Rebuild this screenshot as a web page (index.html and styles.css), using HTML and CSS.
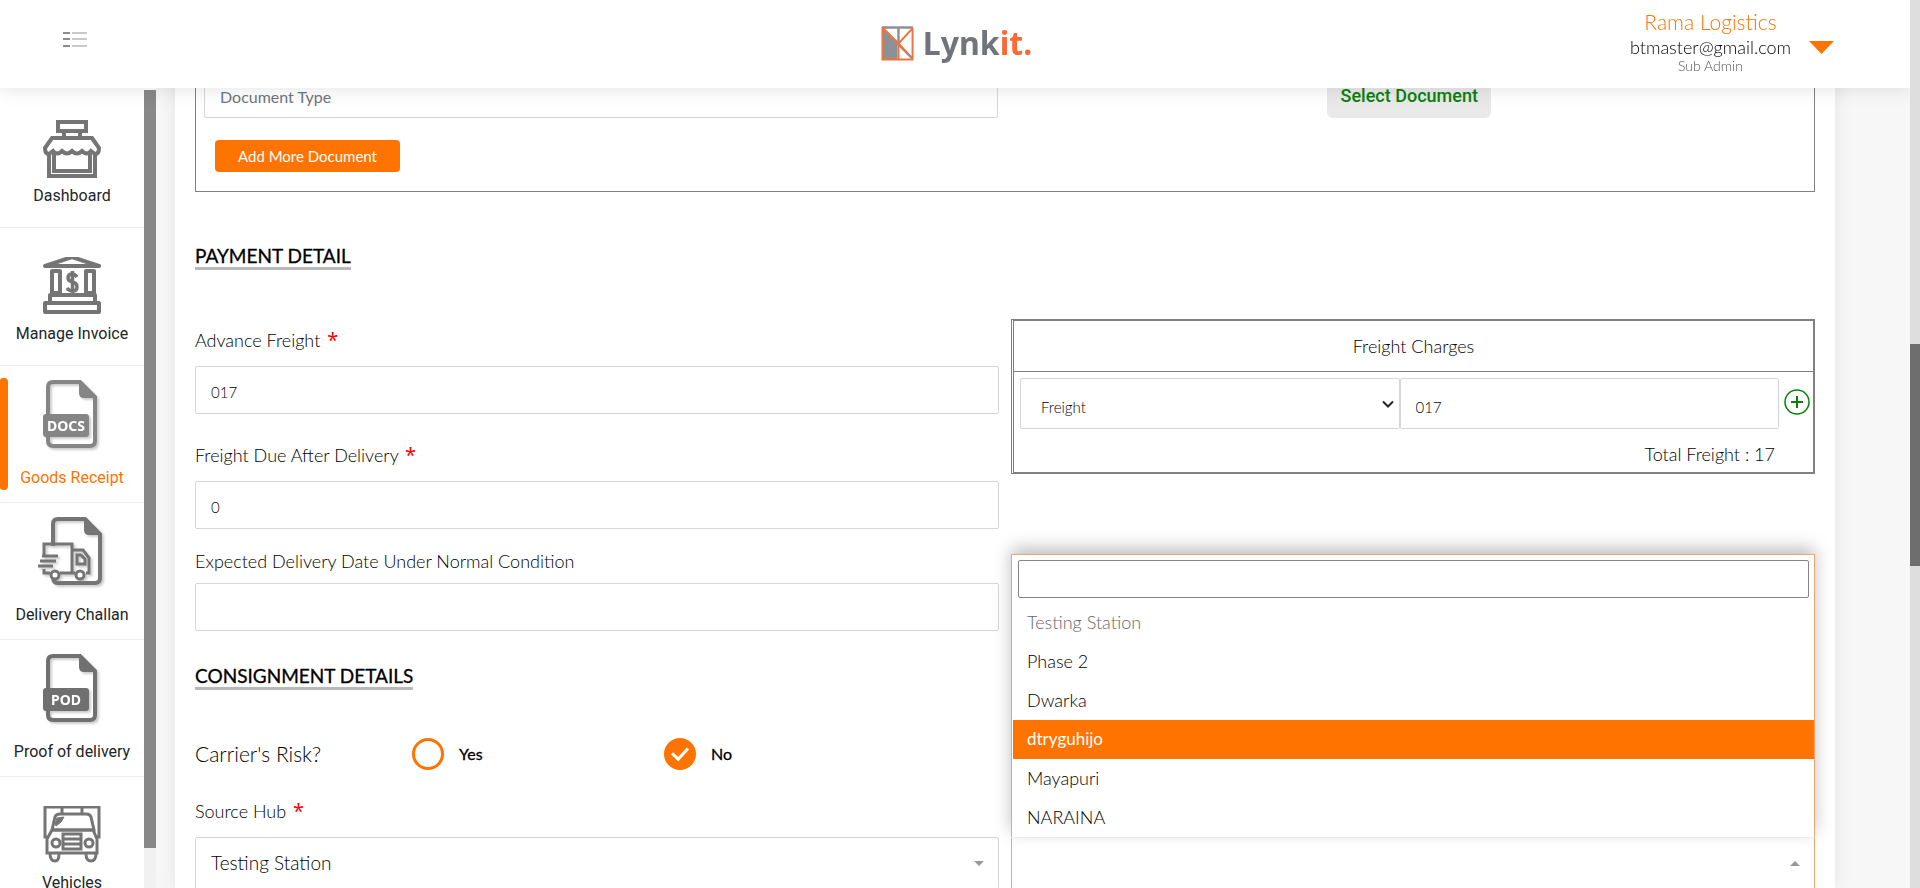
FILE: index.html
```html
<!DOCTYPE html>
<html lang="en">
<head>
<meta charset="utf-8">
<title>Lynkit - Goods Receipt</title>
<link rel="stylesheet" href="styles.css">
</head>
<body>
<header class="topbar">
  <button class="menu-toggle" type="button" aria-label="Toggle menu">
    <svg width="24" height="16" viewBox="0 0 24 16"><path d="M0 1h7M0 7h7M0 14h7" stroke="#8c8c8c" stroke-width="2"/><path d="M9 1h15M9 7h15M9 14h15" stroke="#c9c9c9" stroke-width="2"/></svg>
  </button>
  <a class="brand" href="#" aria-label="Lynkit">
    <svg width="33" height="35" viewBox="0 0 34 36" fill="none"><path d="M2 3L17 18V34H2z" fill="#8d9094"/><path d="M1 1.500H33M18 2V17M17 18L32 33" stroke="#8d9094" stroke-width="2.500"/><path d="M1.500 1V34.500H32.500V2M2 2L18 18V34M18 18L32 3M18 18L28 29" stroke="#f4703a" stroke-width="2"/></svg>
    <span class="brand-name">Lynk<span class="brand-accent">it.</span></span>
  </a>
  <div class="account">
    <div class="account-text">
      <span class="account-name">Rama Logistics</span>
      <span class="account-mail">btmaster@gmail.com</span>
      <span class="account-role">Sub Admin</span>
    </div>
    <button class="account-toggle" type="button" aria-label="Account menu"><svg width="25" height="13" viewBox="0 0 25 13"><path d="M0 0H25L12.500 13z" fill="#ff7300"/></svg></button>
  </div>
</header>

<div class="layout">
  <nav class="sidebar">
    <div class="side-list">
      <a class="side-item" href="#">
        <svg width="58" height="60" viewBox="0 0 58 60" fill="none" stroke="#757575" stroke-width="4"><path d="M15 3H43V12H15zM21 12V19M37 12V19M9 19H49L56 29Q56 35 52 35L48 32Q44 37 39 32Q34 37 29 32Q24 37 19 32Q14 37 10 32L6 35Q2 35 2 29z"/><path d="M6 34V57H52V34M11 34V52H47V34"/></svg>
        <span>Dashboard</span>
      </a>
      <a class="side-item" href="#">
        <svg width="58" height="60" viewBox="0 3 58 60" fill="none" stroke="#757575" stroke-width="3"><path d="M2 12L29 3L56 12zM9 17H17V39H9zM43 17H51V39H43zM7 41H52V49H7zM2 49H56V58H2z" stroke-width="4" stroke-linejoin="round"/><path d="M34 23Q32 20 29 20Q25 20 25 24Q25 27 29.500 28Q34 29 34 33Q34 37 29.500 37Q26 37 24 34M29.500 17V40" stroke-width="3.500"/></svg>
        <span>Manage Invoice</span>
      </a>
      <a class="side-item side-item-doc side-item-active" href="#">
        <svg class="doc-icon" width="60" height="72" viewBox="0 0 60 72"><path d="M11 3H38L53 18V62Q53 67 48 67H11Q6 67 6 62V8Q6 3 11 3z" fill="none" stroke="#858585" stroke-width="4"/><path d="M37 3L53 19H42Q37 19 37 14z" fill="#858585"/><rect x="1" y="35" width="46" height="23" rx="3" fill="#858585"/><text class="doc-tag" x="24" y="52" text-anchor="middle">DOCS</text></svg>
        <span>Goods Receipt</span>
      </a>
      <a class="side-item side-item-doc" href="#">
        <svg class="doc-icon" width="70" height="72" viewBox="0 0 70 72" fill="none" stroke="#757575" stroke-width="4"><path d="M16 30V8Q16 3 21 3H48L63 18V62Q63 67 58 67H21Q17 67 16 63"/><path d="M47 3L63 19H52Q47 19 47 14z" fill="#757575" stroke="none"/><path d="M7 40V28H35V57M35 34H46L52 42V57H49M38 57H23M13 57H7V53" stroke-width="3"/><path d="M40 39H44L48 43V48H40z" stroke-width="3"/><circle cx="18" cy="59" r="4" fill="#fff" stroke-width="3"/><circle cx="43" cy="59" r="4" fill="#fff" stroke-width="3"/><path d="M5 40H21M3 45H19M1 50H16" stroke-width="3"/></svg>
        <span>Delivery Challan</span>
      </a>
      <a class="side-item side-item-doc" href="#">
        <svg class="doc-icon" width="60" height="72" viewBox="0 0 60 72"><path d="M11 3H38L53 18V62Q53 67 48 67H11Q6 67 6 62V8Q6 3 11 3z" fill="none" stroke="#707070" stroke-width="4"/><path d="M37 3L53 19H42Q37 19 37 14z" fill="#707070"/><rect x="1" y="35" width="46" height="23" rx="3" fill="#707070"/><text class="doc-tag" x="24" y="52" text-anchor="middle">POD</text></svg>
        <span>Proof of delivery</span>
      </a>
      <a class="side-item" href="#">
        <svg width="58" height="60" viewBox="0 3 58 60" fill="none" stroke="#757575" stroke-width="3"><path d="M4 34H2V4H56V34H54M19 4V11M39 4V11M9 27L12 14Q13 11 17 11H43Q47 11 48 14L51 27z"/><path d="M9 27L4 36V50H54V36L50 27zM20 31H38V46H20zM21 36H37M21 41H37"/><circle cx="13" cy="40" r="4"/><circle cx="46" cy="40" r="4"/><path d="M7 50Q7 58 12 58Q16 58 16 51M43 51Q43 58 48 58Q53 58 53 50"/><path d="M12 21L14 15L21 14L18 19L13 23z" fill="#757575" stroke-width="1"/></svg>
        <span>Vehicles</span>
      </a>
    </div>
    <div class="side-scroll"><div class="side-thumb"></div></div>
  </nav>

  <main class="content">
    <form class="card">
      <section class="documents">
        <input class="field doc-field" type="text" placeholder="Document Type" aria-label="Document Type">
        <div class="doc-side"><button class="select-doc" type="button">Select Document</button></div>
        <button class="add-doc" type="button">Add More Document</button>
      </section>

      <h2 class="section-title">PAYMENT DETAIL</h2>
      <section class="columns payment">
        <div class="stack">
          <div class="group group-wide"><label class="label" for="advance">Advance Freight <span class="req">*</span></label><input class="field" id="advance" type="text" value="017"></div>
          <div class="group group-mid"><label class="label" for="due">Freight Due After Delivery <span class="req">*</span></label><input class="field" id="due" type="text" value="0"></div>
          <div class="group"><label class="label" for="expected">Expected Delivery Date Under Normal Condition</label><input class="field" id="expected" type="text"></div>
        </div>
        <div class="charges">
          <div class="charges-inner">
            <div class="charges-title">Freight Charges</div>
            <div class="charges-row">
              <select class="field charge-type" aria-label="Charge type"><option>Freight</option></select>
              <input class="field charge-amount" type="text" value="017" aria-label="Charge amount">
              <button class="add-charge" type="button" aria-label="Add charge"><svg width="26" height="26" viewBox="0 0 26 26" fill="none" stroke="#088008" stroke-width="1.500"><circle cx="13" cy="13" r="12"/><path d="M7 13H19M13 7V19" stroke-width="2"/></svg></button>
            </div>
            <div class="charges-total">Total Freight : 17</div>
          </div>
        </div>
      </section>

      <h2 class="section-title">CONSIGNMENT DETAILS</h2>
      <div class="risk" role="radiogroup" aria-labelledby="risk-label">
        <span class="risk-label" id="risk-label">Carrier's Risk?</span>
        <label class="choice"><input class="radio" type="radio" name="risk">Yes</label>
        <label class="choice"><input class="radio" type="radio" name="risk" checked>No</label>
      </div>

      <section class="columns">
        <div class="hub">
          <label class="label" for="source">Source Hub <span class="req">*</span></label>
          <select class="hub-select" id="source"><option>Testing Station</option></select>
        </div>
        <div class="hub">
          <span class="label">&nbsp;</span>
          <div class="hub-open">
            <select class="hub-select hub-select-open" aria-label="Destination"><option></option></select>
            <div class="menu">
              <div class="menu-search"><input class="search" type="search" aria-label="Search stations"></div>
              <ul class="options" role="listbox" aria-label="Stations">
                <li class="option option-disabled" role="option">Testing Station</li>
                <li class="option" role="option">Phase 2</li>
                <li class="option" role="option">Dwarka</li>
                <li class="option option-current" role="option" aria-selected="true">dtryguhijo</li>
                <li class="option" role="option">Mayapuri</li>
                <li class="option" role="option">NARAINA</li>
              </ul>
            </div>
          </div>
        </div>
      </section>
    </form>
  </main>
  <div class="page-scroll"><div class="page-thumb"></div></div>
</div>
</body>
</html>
```
FILE: styles.css
```css
* { box-sizing: border-box; }

body {
  margin: 0;
  height: 100vh;
  overflow: hidden;
  background: #f7f7f7;
  color: #000;
  font-family: Lato, "Open Sans", sans-serif;
  font-size: 18px;
  font-weight: 300;
  line-height: 24px;
}

button, input, select { font: inherit; color: inherit; margin: 0; }
button { border: 0; background: none; padding: 0; cursor: pointer; }
svg { display: block; }

/* top bar */
.topbar {
  position: fixed;
  z-index: 5;
  top: 0;
  left: 0;
  right: 10px;
  height: 88px;
  padding: 0 76px 0 63px;
  display: grid;
  grid-template-columns: 1fr auto 1fr;
  align-items: center;
  background: #fff;
  box-shadow: 0 2px 18px rgba(0, 0, 0, 0.1);
}
.menu-toggle { justify-self: start; padding-bottom: 8px; }
.brand { display: flex; align-items: center; gap: 9px; text-decoration: none; margin-left: 16px; padding-bottom: 2px; }
.brand-name { font: 700 32px/40px "Noto Sans", sans-serif; color: #717478; }
.brand-accent { color: #f96a35; }
.account { justify-self: end; display: flex; align-items: center; gap: 18px; padding-top: 6px; }
.account-text { display: flex; flex-direction: column; align-items: center; margin-top: -12px; }
.account-name { font-size: 21px; line-height: 28px; color: #ff7300; }
.account-mail { line-height: 22px; }
.account-role { font-size: 14px; line-height: 16px; color: #555; }

/* page frame */
.layout { display: flex; height: 100%; }
.sidebar { flex: none; display: flex; width: 156px; padding-top: 90px; background: #fff; }
.side-list { flex: 1; overflow: hidden; }
.side-item {
  display: flex;
  flex-direction: column;
  align-items: center;
  gap: 5px;
  height: 138px;
  padding-top: 29px;
  border-bottom: 1px solid #ececec;
  color: #212529;
  font: 400 16px/24px Roboto, sans-serif;
  text-decoration: none;
}
.side-item-doc { height: 137px; gap: 15px; padding-top: 13px; }
.doc-icon { filter: drop-shadow(2px 2px 1px rgba(0, 0, 0, 0.2)); }
.doc-tag { font: 700 14px "Noto Sans", sans-serif; fill: #fff; }
.side-item-active { position: relative; color: #ff7300; }
.side-item-active::before {
  content: "";
  position: absolute;
  left: 0;
  top: 12px;
  bottom: 12px;
  width: 8px;
  border-radius: 3px 4px 4px 3px;
  background: #ff7300;
}
.side-scroll { width: 12px; background: #f1f1f1; }
.side-thumb { height: 95%; background: #888; }
.content { flex: 1; min-width: 0; padding: 0 75px 0 19px; overflow: hidden; }
.page-scroll { position: relative; z-index: 6; width: 10px; padding-top: 344px; background: #dedede; }
.page-thumb { height: 222px; background: #6e6e6e; }

.card {
  min-height: 100%;
  padding: 0 20px;
  background: #fff;
  box-shadow: 0 0 18px rgba(0, 0, 0, 0.08);
}

/* documents */
.documents {
  display: grid;
  grid-template-columns: 1fr 1fr;
  gap: 22px 15px;
  padding: 70px 8px 19px;
  border: 1px solid #808080;
  border-top: 0;
}
.field {
  width: 100%;
  height: 48px;
  padding: 6px 15px 0;
  border: 1px solid #d5d6d7;
  border-radius: 2px;
  background: #fff;
  font-size: 15px;
}
.field::placeholder { color: #6c757d; opacity: 1; }
.doc-field { padding-top: 4px; font-size: 16px; font-weight: 400; }
.doc-side { display: flex; justify-content: center; }
.select-doc {
  width: 164px;
  padding-top: 4px;
  border-radius: 6px;
  background: #e9e9e9;
  color: #088008;
  font: 500 18px/24px Roboto, sans-serif;
}
.add-doc {
  justify-self: start;
  width: 185px;
  height: 32px;
  margin-left: 11px;
  border-radius: 4px;
  background: #ff7300;
  color: #fff;
  font-size: 15px;
  font-weight: 400;
}

.section-title {
  width: fit-content;
  margin: 0;
  padding-top: 1px;
  border-bottom: 3px solid #b9b9b9;
  font-size: 19px;
  font-weight: 400;
  line-height: 23px;
  -webkit-text-stroke: 0.3px;
}
.documents + .section-title { margin-top: 51px; }

.columns { display: grid; grid-template-columns: 1fr 1fr; gap: 12px; }
.payment { padding: 49px 0 32px; }
.label { display: block; }
.req { color: #f00; font: 400 20px/1 "Noto Sans", sans-serif; line-height: 0; margin-left: 2px; }
.stack { display: flex; flex-direction: column; padding-top: 9px; }
.group { display: flex; flex-direction: column; gap: 10px; }
.group-wide { gap: 14px; margin-bottom: 29px; }
.group-mid { gap: 14px; margin-bottom: 20px; }
.stack .field { padding-top: 4px; }

.charges { align-self: start; border: 1px solid #808080; padding-left: 1px; }
.charges-inner { border: 1px solid #808080; }
.charges-title { padding: 13px; border-bottom: 1px solid #808080; text-align: center; }
.charges-row { display: flex; align-items: center; padding: 6px 3px 0 6px; }
.charges-row .field { flex: 1 1 50%; min-width: 0; height: 51px; }
.charge-type {
  appearance: none;
  padding-left: 20px;
  background: #fff url("data:image/svg+xml,%3Csvg xmlns='http://www.w3.org/2000/svg' width='12' height='8'%3E%3Cpath d='M1 1.500l5 5 5-5' fill='none' stroke='%23212529' stroke-width='2'/%3E%3C/svg%3E") no-repeat right 5px center;
}
.add-charge { margin-left: 5px; padding-bottom: 3px; }
.charges-total { padding: 13px 38px 6px; text-align: right; }

/* consignment */
.risk { display: grid; grid-template-columns: 217px 252px 1fr; align-items: center; padding: 48px 0 29px; }
.risk-label { font-size: 21px; }
.choice { display: flex; align-items: center; gap: 15px; font-size: 16px; font-weight: 400; -webkit-text-stroke: 0.3px; }
.radio {
  appearance: none;
  display: grid;
  place-items: center;
  width: 32px;
  height: 32px;
  border: 3px solid #ff7300;
  border-radius: 50%;
}
.radio:checked { background: #ff7300; }
.radio:checked::before {
  content: "";
  width: 7px;
  height: 13px;
  margin-bottom: 4px;
  border: solid #fff;
  border-width: 0 3px 3px 0;
  transform: rotate(42deg);
}
.hub { display: flex; flex-direction: column; gap: 14px; }
.hub-open { position: relative; }
.hub-select {
  appearance: none;
  width: 100%;
  height: 52px;
  padding: 0 15px;
  border: 1px solid #d5d6d7;
  border-radius: 2px;
  background: #fff url("data:image/svg+xml,%3Csvg xmlns='http://www.w3.org/2000/svg' width='10' height='5'%3E%3Cpath d='M0 0h10L5 5z' fill='%23999'/%3E%3C/svg%3E") no-repeat right 14px center;
  font-size: 19px;
}
.hub-select-open {
  border-color: #efa66c;
  border-top-color: #f8f8f8;
  background-image: url("data:image/svg+xml,%3Csvg xmlns='http://www.w3.org/2000/svg' width='10' height='5'%3E%3Cpath d='M0 5h10L5 0z' fill='%23999'/%3E%3C/svg%3E");
}
.menu {
  position: absolute;
  left: 0;
  right: 0;
  bottom: 100%;
  border: 1px solid #efa66c;
  border-bottom: 0;
  background: #fff;
  box-shadow: 0 -6px 16px rgba(0, 0, 0, 0.25);
}
.menu-search { padding: 5px 5px 5px 6px; }
.search {
  display: block;
  width: 100%;
  height: 38px;
  padding: 4px;
  border: 1px solid #858585;
  border-radius: 2px;
  appearance: none;
}
.options { margin: 0; padding: 0 0 0 1px; list-style: none; }
.option { padding: 7px 14px 8px; }
.option-disabled { color: #666; }
.option-current { background: #ff7300; color: #fff; font-weight: 400; font-size: 17px; }
```
